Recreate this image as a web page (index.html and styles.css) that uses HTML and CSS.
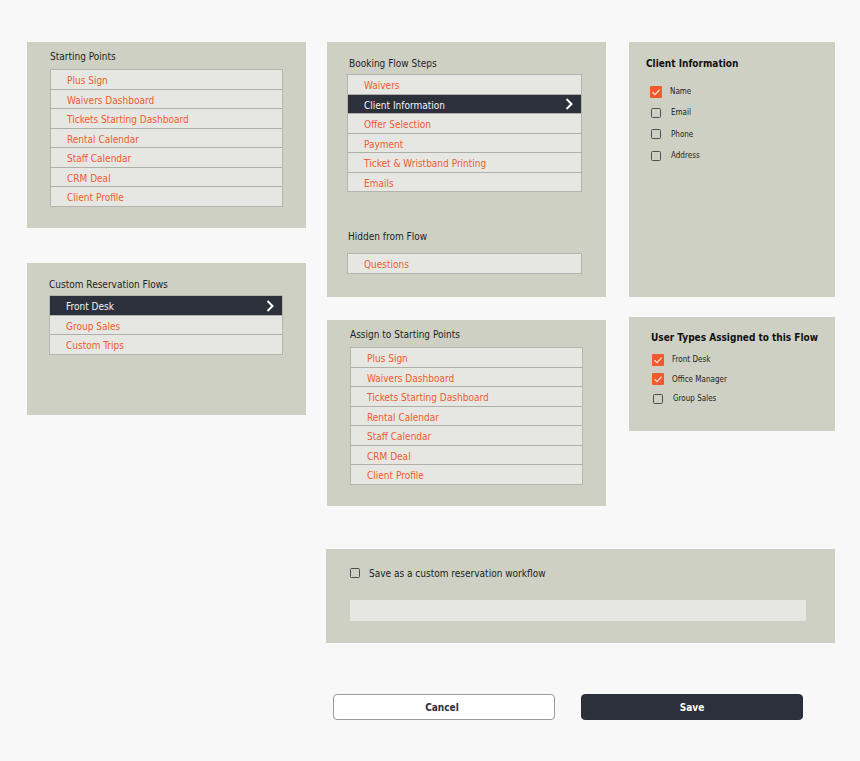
FILE: index.html
```html
<!DOCTYPE html>
<html>
<head>
    <title>Reservation Flow Settings</title>
    <link rel="stylesheet" href="styles.css">
</head>
<body>
    <div class="page">
        <div class="columns">
            <div class="col col-left">
                <section class="panel panel-starts">
                    <h2 class="panel-title">Starting Points</h2>
                    <ul class="list">
                        <li>Plus Sign</li>
                        <li>Waivers Dashboard</li>
                        <li>Tickets Starting Dashboard</li>
                        <li>Rental Calendar</li>
                        <li>Staff Calendar</li>
                        <li>CRM Deal</li>
                        <li>Client Profile</li>
                    </ul>
                </section>

                <section class="panel panel-flows">
                    <h2 class="panel-title">Custom Reservation Flows</h2>
                    <ul class="list">
                        <li class="active">Front Desk
                            <svg class="chevron" width="8" height="12" viewBox="0 0 8 12"><polyline points="1.5,1 6.5,6 1.5,11" /></svg>
                        </li>
                        <li>Group Sales</li>
                        <li>Custom Trips</li>
                    </ul>
                </section>
            </div>

            <div class="col col-mid">
                <section class="panel panel-steps">
                    <h2 class="panel-title">Booking Flow Steps</h2>
                    <ul class="list">
                        <li>Waivers</li>
                        <li class="active">Client Information
                            <svg class="chevron" width="8" height="12" viewBox="0 0 8 12"><polyline points="1.5,1 6.5,6 1.5,11" /></svg>
                        </li>
                        <li>Offer Selection</li>
                        <li>Payment</li>
                        <li>Ticket &amp; Wristband Printing</li>
                        <li>Emails</li>
                    </ul>
                    <h2 class="panel-title hidden-title">Hidden from Flow</h2>
                    <ul class="list">
                        <li>Questions</li>
                    </ul>
                </section>

                <section class="panel panel-assign">
                    <h2 class="panel-title">Assign to Starting Points</h2>
                    <ul class="list">
                        <li>Plus Sign</li>
                        <li>Waivers Dashboard</li>
                        <li>Tickets Starting Dashboard</li>
                        <li>Rental Calendar</li>
                        <li>Staff Calendar</li>
                        <li>CRM Deal</li>
                        <li>Client Profile</li>
                    </ul>
                </section>
            </div>

            <div class="col col-right">
                <section class="panel panel-client">
                    <h2 class="panel-title bold">Client Information</h2>
                    <div class="checklist">
                        <label class="check-row"><span class="box checked"><svg width="12" height="12" viewBox="0 0 12 12"><polyline points="2.5,6.2 5,8.6 9.6,3.6" /></svg></span>Name</label>
                        <label class="check-row"><span class="box"></span>Email</label>
                        <label class="check-row"><span class="box"></span>Phone</label>
                        <label class="check-row"><span class="box"></span>Address</label>
                    </div>
                </section>

                <section class="panel panel-users">
                    <h2 class="panel-title bold">User Types Assigned to this Flow</h2>
                    <div class="checklist">
                        <label class="check-row"><span class="box checked"><svg width="12" height="12" viewBox="0 0 12 12"><polyline points="2.5,6.2 5,8.6 9.6,3.6" /></svg></span>Front Desk</label>
                        <label class="check-row"><span class="box checked"><svg width="12" height="12" viewBox="0 0 12 12"><polyline points="2.5,6.2 5,8.6 9.6,3.6" /></svg></span>Office Manager</label>
                        <label class="check-row"><span class="box"></span>Group Sales</label>
                    </div>
                </section>
            </div>
        </div>

        <div class="bottom">
            <section class="panel panel-save">
                <label class="save-row"><span class="box"></span>Save as a custom reservation workflow</label>
                <input type="text" class="name-input" />
            </section>

            <div class="actions">
                <button class="btn btn-cancel">Cancel</button>
                <button class="btn btn-save">Save</button>
            </div>
        </div>
    </div>
</body>
</html>
```

FILE: styles.css
```css
body {
    margin: 0;
    background-color: #f8f8f8;
    font-family: "DejaVu Sans Condensed", "DejaVu Sans", sans-serif;
    color: #222;
}
.page {
    padding: 42px 0 0 27px;
}
.columns {
    display: flex;
    align-items: flex-start;
}
.col {
    display: flex;
    flex-direction: column;
}
.col-left {
    width: 279px;
    gap: 35px;
}
.col-mid {
    width: 279px;
    margin-left: 21px;
    gap: 23px;
}
.col-right {
    width: 206px;
    margin-left: 23px;
    gap: 20px;
}
.panel {
    background-color: #cfd0c4;
    box-sizing: border-box;
}
.panel-title {
    margin: 0;
    font-size: 10px;
    font-weight: normal;
    line-height: 14px;
    color: #1e1e1e;
    white-space: nowrap;
}
.panel-title.bold {
    font-weight: bold;
    color: #111;
}

/* panels with list of items */
.panel-starts {
    height: 186px;
    padding: 8px 23px 0;
}
.panel-starts .panel-title,
.panel-assign .panel-title {
    margin-bottom: 5px;
}
.panel-flows {
    height: 152px;
    padding: 15px 23px 0 22px;
}
.panel-flows .panel-title,
.panel-steps .panel-title {
    margin-bottom: 3px;
}
.panel-steps {
    height: 255px;
    padding: 15px 24px 0 20px;
}
.panel-steps .panel-title {
    padding-left: 2px;
}
.panel-steps .hidden-title {
    padding-left: 1px;
    margin-top: 38px;
    margin-bottom: 9px;
}
.panel-assign {
    height: 186px;
    padding: 8px 23px 0;
}

.list {
    list-style: none;
    margin: 0;
    padding: 0;
    border: 1px solid #b4b5af;
}
.list li {
    position: relative;
    height: 18.5px;
    line-height: 21px;
    padding-left: 16px;
    background-color: #e6e7e3;
    color: #f15a2c;
    font-size: 10px;
}
.list li + li {
    border-top: 1px solid #aeafa9;
}
.list li.active {
    background-color: #2c303a;
    color: #f4f4f4;
}
.chevron {
    position: absolute;
    right: 8px;
    top: 3.5px;
}
.chevron polyline {
    fill: none;
    stroke: #fff;
    stroke-width: 2;
}

/* checkbox panels */
.panel-client {
    height: 255px;
    padding: 15px 10px 0 17px;
}
.panel-client .checklist {
    margin-top: 10px;
    padding-left: 4px;
}
.panel-client .check-row {
    height: 21.3px;
}
.panel-users {
    height: 114px;
    padding: 14px 8px 0 22px;
}
.panel-users .checklist {
    margin-top: 5px;
    padding-left: 1px;
}
.panel-users .check-row {
    height: 19.5px;
}
.check-row {
    display: flex;
    align-items: center;
    font-size: 8px;
    color: #222;
}
.box {
    display: inline-block;
    width: 10px;
    height: 10px;
    margin: 0 10px 0 1px;
    box-sizing: border-box;
    border: 1.5px solid #4d4f52;
    border-radius: 1.5px;
    flex-shrink: 0;
}
.box.checked {
    width: 12px;
    height: 12px;
    margin: 0 8px 0 0;
    border: none;
    border-radius: 1px;
    background-color: #f15a2c;
}
.box svg {
    display: block;
}
.box polyline {
    fill: none;
    stroke: #fbe3d8;
    stroke-width: 1.3;
}

/* save section */
.bottom {
    margin-left: 299px;
    margin-top: 43px;
    width: 509px;
}
.panel-save {
    height: 94px;
    padding: 18px 30px 0 23px;
}
.save-row {
    display: flex;
    align-items: center;
    height: 12px;
    font-size: 10px;
    color: #222;
}
.save-row .box {
    margin-right: 9px;
}
.name-input {
    display: block;
    width: 456px;
    height: 21px;
    margin: 21px 0 0 1px;
    border: none;
    background-color: #e6e7e3;
    box-sizing: border-box;
}
.actions {
    display: flex;
    gap: 26px;
    margin-top: 51px;
    padding-left: 7px;
}
.btn {
    width: 222px;
    height: 26px;
    border-radius: 4px;
    font-family: "DejaVu Sans Condensed", "DejaVu Sans", sans-serif;
    font-size: 10px;
    font-weight: bold;
    cursor: pointer;
}
.btn-cancel {
    background-color: #fff;
    border: 1px solid #9a9a9a;
    color: #2c303a;
    padding-right: 10px;
}
.btn-save {
    background-color: #2c303a;
    border: 1px solid #2c303a;
    color: #fff;
}
```
